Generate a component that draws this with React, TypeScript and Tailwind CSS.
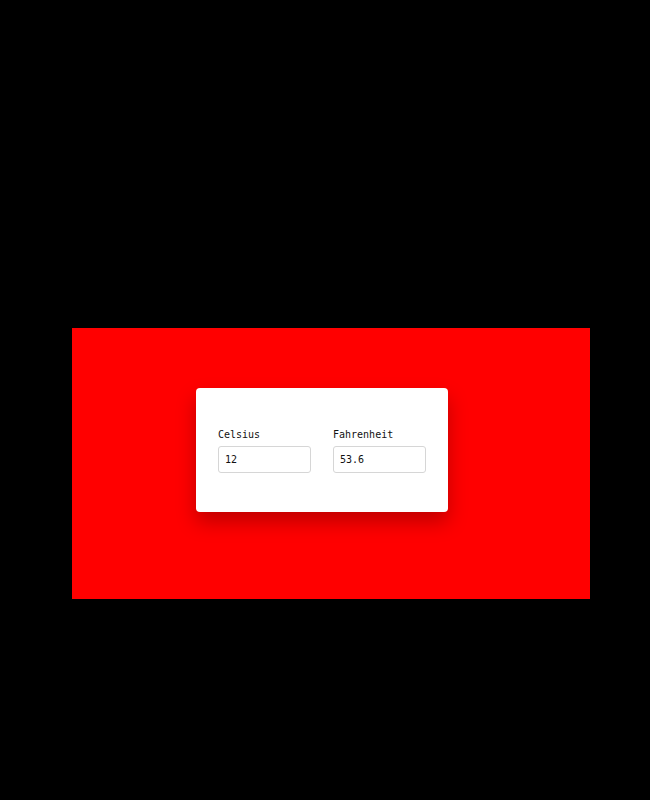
import { useState } from 'react'

export default function App() {
  const [celsius, setCelsius] = useState('12')
  const [fahrenheit, setFahrenheit] = useState('53.6')

  function onCelsius(v: string) {
    setCelsius(v)
    const n = parseFloat(v)
    setFahrenheit(isNaN(n) ? '' : String(Math.round((n * 9 / 5 + 32) * 100) / 100))
  }

  function onFahrenheit(v: string) {
    setFahrenheit(v)
    const n = parseFloat(v)
    setCelsius(isNaN(n) ? '' : String(Math.round(((n - 32) * 5 / 9) * 100) / 100))
  }

  return (
    <div className="w-[650px] h-[800px] bg-black pt-[328px] pl-[72px] font-['DejaVu_Sans_Mono',monospace]">
      <div className="w-[518px] h-[271px] bg-[#ff0000] pt-[60px] pl-[124px]">
        <div className="w-[252px] h-[124px] bg-white rounded-[4px] shadow-[0_10px_20px_rgba(0,0,0,0.25)] px-[22px] pt-[41px] flex gap-[22px]">
          <label className="flex flex-col w-[93px]">
            <span className="text-[10px] leading-[12px] text-[#111] mb-[5px]">Celsius</span>
            <input
              value={celsius}
              onChange={e => onCelsius(e.target.value)}
              className="h-[27px] w-full border border-[#d6d6d6] rounded-[3px] px-[6px] text-[10px] text-[#111] outline-none"
            />
          </label>
          <label className="flex flex-col w-[93px]">
            <span className="text-[10px] leading-[12px] text-[#111] mb-[5px]">Fahrenheit</span>
            <input
              value={fahrenheit}
              onChange={e => onFahrenheit(e.target.value)}
              className="h-[27px] w-full border border-[#d6d6d6] rounded-[3px] px-[6px] text-[10px] text-[#111] outline-none"
            />
          </label>
        </div>
      </div>
    </div>
  )
}
